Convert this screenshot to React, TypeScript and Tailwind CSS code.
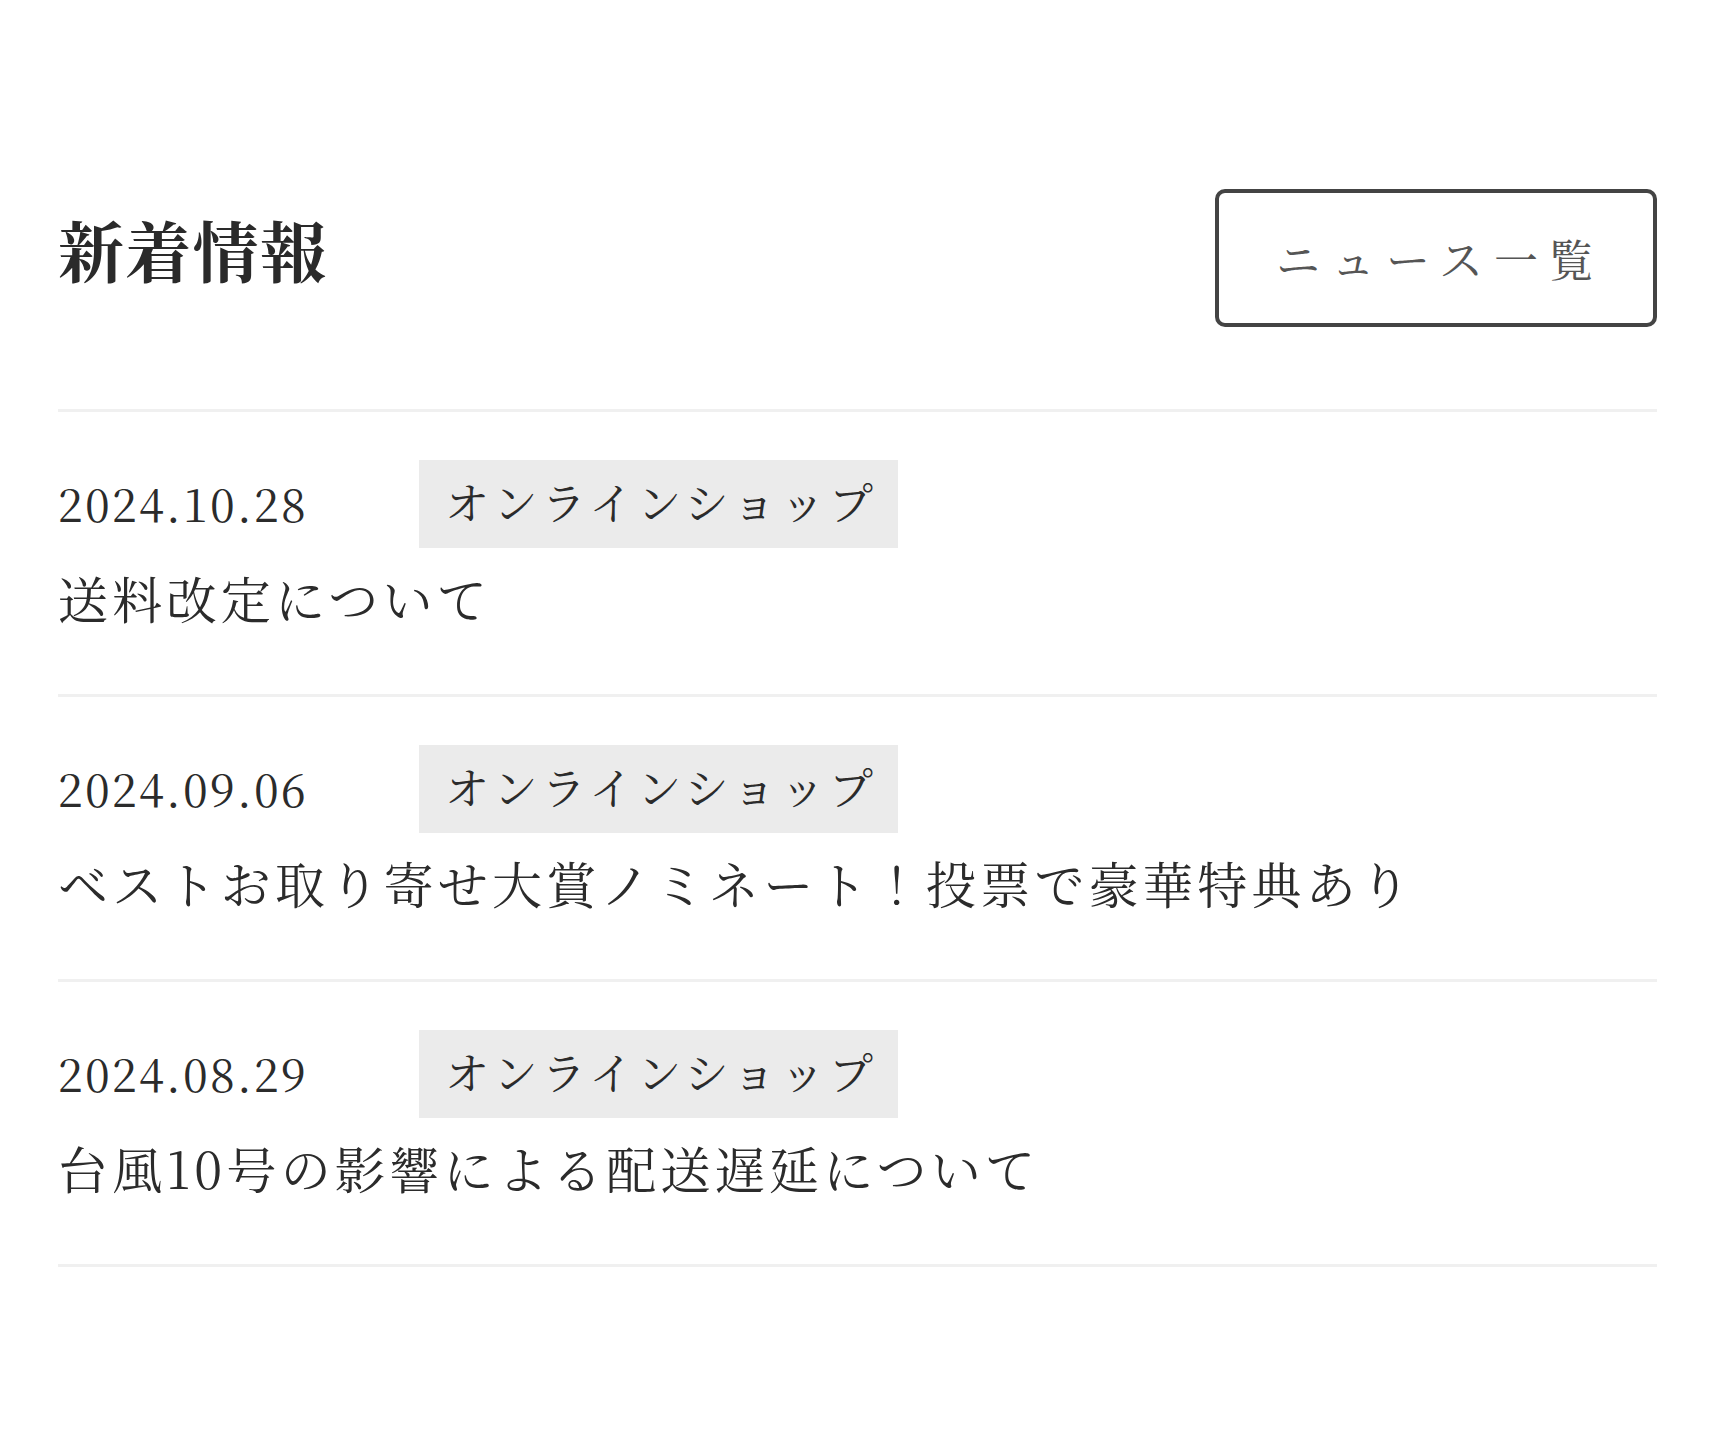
const news = [
  { date: '2024.10.28', tag: 'オンラインショップ', title: '送料改定について' },
  { date: '2024.09.06', tag: 'オンラインショップ', title: 'ベストお取り寄せ大賞ノミネート！投票で豪華特典あり' },
  { date: '2024.08.29', tag: 'オンラインショップ', title: '台風10号の影響による配送遅延について' },
];

const serif = "font-['Noto_Serif_CJK_JP','Liberation_Serif','Noto_Sans_CJK_JP',serif]";

export default function App() {
  return (
    <div className={`min-h-[1432px] bg-white pl-[58px] pr-[63px] pt-[189px] text-[#2b2b2b] ${serif}`}>
      <div className="flex items-center justify-between">
        <h2 className="mb-[18px] text-[66px] font-bold leading-none tracking-[0.02em] text-[#2a2a2a]">新着情報</h2>
        <a
          href="#"
          className="flex h-[138px] w-[442px] items-center justify-center rounded-[10px] border-4 border-[#444] pl-[8px] text-[44px] tracking-[0.25em] text-[#555]"
        >
          ニュース一覧
        </a>
      </div>

      <ul className="mt-[82px] border-t-[3px] border-[#f0f0f0]">
        {news.map((item) => (
          <li key={item.date} className="border-b-[3px] border-[#f0f0f0] pb-[61px] pt-[48px]">
            <div className="flex items-center">
              <span className="mb-[4px] w-[361px] text-[45px] leading-none tracking-[0.05em]">{item.date}</span>
              <span className="flex h-[88px] w-[479px] items-center bg-[#ebebeb] pb-[6px] pl-[26px] text-[44px] leading-none tracking-[0.1em]">
                {item.tag}
              </span>
            </div>
            <p className="mt-[13px] text-[50px] leading-[72px] tracking-[0.085em]">{item.title}</p>
          </li>
        ))}
      </ul>
    </div>
  );
}
